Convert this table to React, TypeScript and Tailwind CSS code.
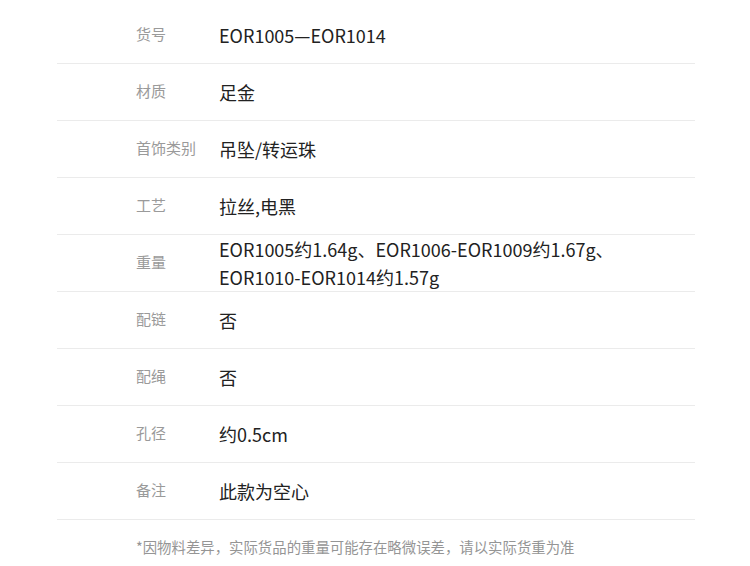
import React from "react";

const rows: { label: string; value: React.ReactNode }[] = [
    { label: "货号", value: "EOR1005—EOR1014" },
    { label: "材质", value: "足金" },
    { label: "首饰类别", value: "吊坠/转运珠" },
    { label: "工艺", value: "拉丝,电黑" },
    {
        label: "重量",
        value: (
            <>
                EOR1005约1.64g、EOR1006-EOR1009约1.67g、
                <br />
                EOR1010-EOR1014约1.57g
            </>
        ),
    },
    { label: "配链", value: "否" },
    { label: "配绳", value: "否" },
    { label: "孔径", value: "约0.5cm" },
    { label: "备注", value: "此款为空心" },
];

const App: React.FC = () => {
    return (
        <div
            className="w-[750px] h-[566px] bg-white pt-[7px]"
            style={{ fontFamily: '"Noto Sans CJK SC", "Noto Sans", sans-serif' }}
        >
            <div className="ml-[57px] w-[638px]">
                {rows.map((row) => (
                    <div
                        key={row.label}
                        className="flex items-center h-[57px] border-b border-[#ebebeb]"
                    >
                        <div className="w-[162px] pl-[79px] text-[15px] text-[#9a9a9a] shrink-0 -mt-px">
                            {row.label}
                        </div>
                        <div className="text-[18px] leading-[28px] text-[#222] -mt-px">
                            {row.value}
                        </div>
                    </div>
                ))}
            </div>
            <p className="mt-[16px] pl-[136px] text-[14.4px] text-[#959595]">
                *因物料差异，实际货品的重量可能存在略微误差，请以实际货重为准
            </p>
        </div>
    );
};

export default App;
